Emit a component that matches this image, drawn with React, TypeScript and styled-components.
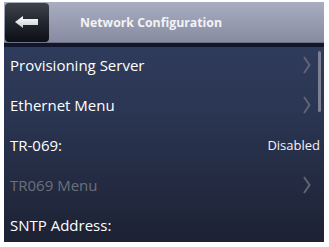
import { FC } from 'react';
import styled, { createGlobalStyle } from 'styled-components';

const GlobalStyle = createGlobalStyle`
	html, body {
		margin: 0;
		padding: 0;
		background: #ffffff;
	}
`;

type Row = {
	label: string;
	value?: string;
	arrow?: boolean;
	disabled?: boolean;
};

const rows: Row[] = [
	{ label: 'Provisioning Server', arrow: true },
	{ label: 'Ethernet Menu', arrow: true },
	{ label: 'TR-069:', value: 'Disabled' },
	{ label: 'TR069 Menu', arrow: true, disabled: true },
	{ label: 'SNTP Address:' },
];

const BackArrow: FC = () => (
	<svg width="24" height="12" viewBox="0 0 24 12">
		<defs>
			<linearGradient id="arrowFill" x1="0" y1="0" x2="0" y2="1">
				<stop offset="0" stopColor="#ffffff" />
				<stop offset="1" stopColor="#c9ccd1" />
			</linearGradient>
		</defs>
		<polygon points="0,6 8,0 8,3 23,3 23,9 8,9 8,12" fill="url(#arrowFill)" />
	</svg>
);

const Chevron: FC = () => (
	<svg width="8" height="18" viewBox="0 0 8 18">
		<polyline points="1,1 6.5,9 1,17" fill="none" stroke="#5f6575" strokeWidth="2" />
	</svg>
);

const App: FC = () => {
	return (
		<>
			<GlobalStyle />
			<Screen>
				<Header>
					<BackButton>
						<BackArrow />
					</BackButton>
					<Title>Network Configuration</Title>
				</Header>
				<HeaderRule />
				<List>
					{rows.map((row) => (
						<ListRow key={row.label}>
							<Label disabled={row.disabled}>{row.label}</Label>
							{row.value && <Value>{row.value}</Value>}
							{row.arrow && (
								<ArrowSlot>
									<Chevron />
								</ArrowSlot>
							)}
						</ListRow>
					))}
					<ScrollBar />
				</List>
			</Screen>
		</>
	);
};

const Screen = styled.div`
	margin: 2px 0 0 4px;
	width: 320px;
	height: 240px;
	overflow: hidden;
	display: flex;
	flex-direction: column;
	font-family: 'Open Sans', 'DejaVu Sans', sans-serif;
	background: linear-gradient(to bottom, #323f60 0%, #2b3653 45%, #1d2234 100%);
`;

const Header = styled.div`
	height: 40px;
	flex: none;
	display: flex;
	align-items: center;
	padding-left: 1px;
	background: linear-gradient(to bottom, #a9adc1 0%, #9599ae 60%, #878ba2 100%);
`;

const BackButton = styled.div`
	width: 44px;
	height: 39px;
	border-radius: 4px;
	display: flex;
	align-items: center;
	justify-content: center;
	background: linear-gradient(to bottom, #3d424c 0%, #22262e 50%, #0c0f14 100%);
`;

const Title = styled.div`
	margin-left: 31px;
	color: #f2f3f6;
	font-size: 12.3px;
	font-weight: 700;
`;

const HeaderRule = styled.div`
	flex: none;
	height: 5px;
	border-top: 1px solid #6d7188;
	background: #12162a;
	box-sizing: border-box;
`;

const List = styled.div`
	position: relative;
	flex: 1;
`;

const ListRow = styled.div`
	height: 40px;
	display: flex;
	align-items: center;
	padding: 0 4px 4px 6px;
	box-sizing: border-box;
`;

const Label = styled.div<{ disabled?: boolean }>`
	flex: 1;
	font-size: 15px;
	color: ${(p) => (p.disabled ? '#6b707c' : '#ffffff')};
`;

const Value = styled.div`
	font-size: 13px;
	color: #f4f4f6;
`;

const ArrowSlot = styled.div`
	display: flex;
	margin-right: 9px;
`;

const ScrollBar = styled.div`
	position: absolute;
	top: 4px;
	right: 3px;
	width: 3px;
	height: 61px;
	border-radius: 2px;
	background: #7b8192;
`;

export default App;
